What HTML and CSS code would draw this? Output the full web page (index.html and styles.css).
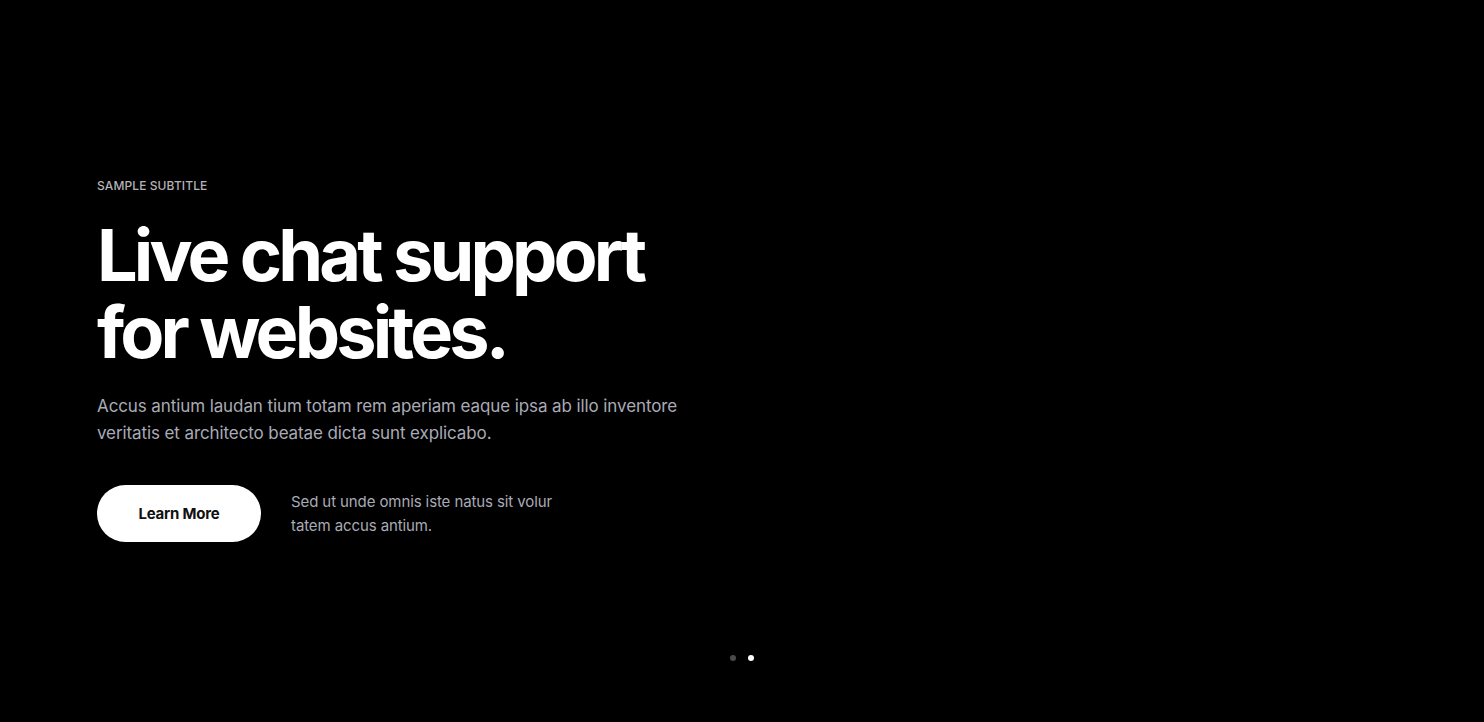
FILE: index.html
```html
<!DOCTYPE html>
<html lang="en">
<head>
<meta charset="utf-8">
<title>Live chat support</title>
<link rel="stylesheet" href="styles.css">
</head>
<body>
<main class="hero">
  <div class="hero-content">
    <p class="subtitle">SAMPLE SUBTITLE</p>
    <h1 class="title">Live chat support<br>for websites.</h1>
    <p class="lead">Accus antium laudan tium totam rem aperiam eaque ipsa ab illo inventore veritatis et architecto beatae dicta sunt explicabo.</p>
    <div class="actions">
      <a class="btn" href="#">Learn More</a>
      <p class="note">Sed ut unde omnis iste natus sit volur<br>tatem accus antium.</p>
    </div>
  </div>
  <div class="dots">
    <span class="dot"></span>
    <span class="dot active"></span>
  </div>
</main>
</body>
</html>
```
FILE: styles.css
```css
* { box-sizing: border-box; }
html, body { margin: 0; padding: 0; }
body {
  background: #000;
  color: #fff;
  font-family: Inter, "Noto Sans", sans-serif;
  width: 1484px;
  height: 722px;
  overflow: hidden;
}
.hero {
  height: 722px;
  display: flex;
  flex-direction: column;
  padding: 178px 0 0 97px;
}
.hero-content { flex: 1; }
.subtitle {
  margin: 0;
  font-size: 12px;
  line-height: 16px;
  color: #b3b3b8;
  font-weight: 500;
  letter-spacing: 0.1px;
}
.title {
  margin: 22px 0 0 0;
  font-size: 72px;
  line-height: 77px;
  font-weight: 700;
  letter-spacing: -3.85px;
  color: #fff;
}
.lead {
  margin: 23px 0 0 0;
  width: 620px;
  font-size: 17px;
  line-height: 27px;
  color: #a9abb6;
  letter-spacing: -0.1px;
}
.actions {
  margin-top: 38px;
  display: flex;
  align-items: center;
  gap: 30px;
}
.btn {
  display: flex;
  align-items: center;
  justify-content: center;
  width: 164px;
  height: 57px;
  border-radius: 29px;
  background: #fff;
  color: #111;
  text-decoration: none;
  font-weight: 700;
  font-size: 15px;
  letter-spacing: -0.2px;
}
.note {
  margin: 0;
  font-size: 15px;
  line-height: 24px;
  color: #a9abb6;
  letter-spacing: -0.1px;
}
.dots {
  display: flex;
  justify-content: center;
  gap: 12px;
  padding: 0 0 61px 0;
  margin-left: -97px;
}
.dot {
  width: 6px;
  height: 6px;
  border-radius: 50%;
  background: #4a4a4a;
}
.dot.active { background: #fff; }
```
